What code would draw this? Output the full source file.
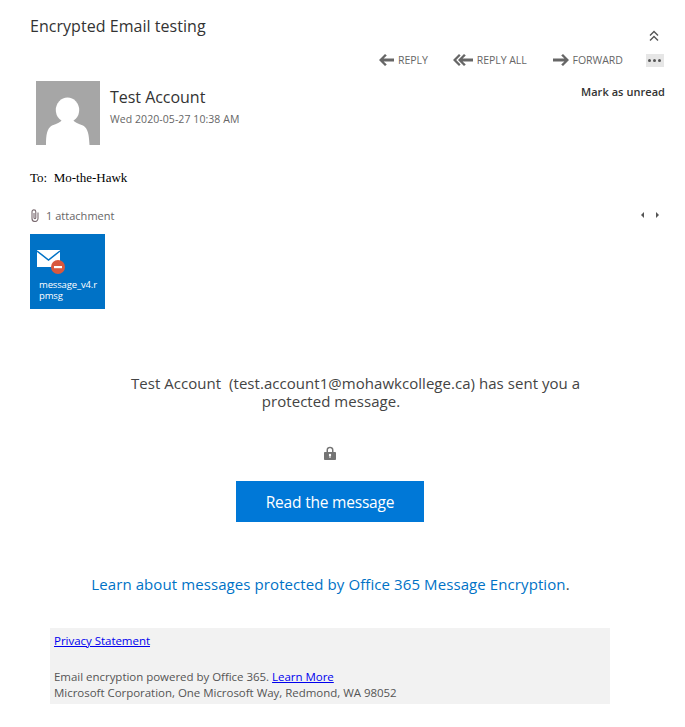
<template>
  <div class="page">
    <div class="title-row">
      <h1 class="title">Encrypted Email testing</h1>
      <svg class="collapse" width="10" height="12" viewBox="0 0 10 12" fill="none" stroke="#555" stroke-width="1.400">
        <path d="M1 5.500 5 1.500l4 4M1 10.500l4-4 4 4" />
      </svg>
    </div>

    <div class="actions">
      <span class="action reply">
        <svg width="15" height="12" viewBox="0 0 15 12"><path d="M6 0 7.800 1.500 4.600 4.500H15V7.500H4.600L7.800 10.500 6 12 0 6Z" fill="#666" /></svg>
        REPLY
      </span>
      <span class="action replyall">
        <svg width="20" height="12" viewBox="0 0 20 12"><path d="M6 0 7.600 1.500 3.200 6 7.600 10.500 6 12 0 6ZM11 0 12.800 1.500 9.600 4.500H20V7.500H9.600L12.800 10.500 11 12 5 6Z" fill="#666" /></svg>
        REPLY ALL
      </span>
      <span class="action forward">
        <svg width="16" height="12" viewBox="0 0 16 12"><path d="M10 0 8.200 1.500 11.400 4.500H0V7.500H11.400L8.200 10.500 10 12 16 6Z" fill="#666" /></svg>
        FORWARD
      </span>
      <span class="more"><i></i><i></i><i></i></span>
    </div>

    <div class="sender">
      <svg class="avatar" width="64" height="64" viewBox="0 0 64 64">
        <rect width="64" height="64" fill="#a6a6a6" />
        <ellipse cx="31.500" cy="29" rx="11.700" ry="12.500" fill="#fff" />
        <path d="M10 64C10 54 11 47 16 44.500 21 42.500 24 41.500 26 39H37C39 41.500 42 42.500 47 44.500 52 47 53 54 53.500 64Z" fill="#fff" />
      </svg>
      <div class="sender-text">
        <div class="name">Test Account</div>
        <div class="date">Wed 2020-05-27 10:38 AM</div>
      </div>
      <div class="unread">Mark as unread</div>
    </div>

    <div class="to">To:&nbsp; Mo-the-Hawk</div>

    <div class="attach-row">
      <svg width="8" height="13" viewBox="0 0 8 13" fill="none" stroke="#7a6a70" stroke-width="1.100">
        <path d="M7 3.500V9.500A3 3 0 0 1 1 9.500V2.800A1.900 1.900 0 0 1 4.800 2.800V8.800A.9.9 0 0 1 3 8.800V4" />
      </svg>
      <span class="attach-label">1 attachment</span>
      <span class="pager"><i class="left"></i><i class="right"></i></span>
    </div>

    <div class="tile">
      <svg class="tile-icon" width="30" height="29" viewBox="0 0 30 29">
        <path d="M0 0H23V17H0Z" fill="#fff" />
        <path d="M0 1 11.500 10 23 1" fill="none" stroke="#0072c6" stroke-width="1.500" />
        <circle cx="21" cy="17" r="7" fill="#d9583e" />
        <rect x="17" y="16" width="8" height="2.200" fill="#fff" />
      </svg>
      <div class="tile-name">message_v4.r<br />pmsg</div>
    </div>

    <div class="message">
      <div class="message-first">Test Account &nbsp;(test.account1@mohawkcollege.ca) has sent you a</div>
      <div class="message-second">protected message.</div>
    </div>

    <svg class="lock" width="12" height="14" viewBox="0 0 12 14">
      <path d="M1 6H2.500V4C2.500 2 4 .8 6 .8S9.500 2 9.500 4V6H11C11.500 6 12 6.400 12 7V13C12 13.600 11.500 14 11 14H1C.5 14 0 13.600 0 13V7C0 6.400 .5 6 1 6ZM4 6H8V4C8 2.800 7.100 2.200 6 2.200S4 2.800 4 4Z" fill="#747474" fill-rule="evenodd" />
      <circle cx="6" cy="9" r="1.200" fill="#fff" />
      <rect x="5.500" y="9" width="1" height="3" fill="#fff" />
    </svg>

    <a class="button">Read the message</a>

    <div class="learn"><a>Learn about messages protected by Office 365 Message Encryption</a>.</div>

    <div class="footer">
      <a class="plain">Privacy Statement</a>
      <div class="footer-copy">
        Email encryption powered by Office 365. <a class="plain">Learn More</a><br />
        Microsoft Corporation, One Microsoft Way, Redmond, WA 98052
      </div>
    </div>
  </div>
</template>

<style>
html, body { margin: 0; background: #fff; }
</style>

<style scoped>
.page {
  width: 685px;
  height: 727px;
  overflow: hidden;
  font-family: "Open Sans", "Noto Sans", sans-serif;
  color: #333;
  box-sizing: border-box;
  padding-top: 15px;
  display: flex;
  flex-direction: column;
}
.title-row { display: flex; justify-content: space-between; padding: 0 26px 0 30px; height: 25px; }
.title { margin: 0; font-size: 16px; font-weight: 400; line-height: 22px; color: #333; letter-spacing: 0.04px; }
.collapse { margin-top: 15px; }
.actions { display: flex; align-items: center; height: 20px; margin-top: 10px; padding-left: 379px; color: #666; font-size: 10.500px; letter-spacing: -0.05px; }
.action { display: inline-flex; align-items: center; gap: 4px; }
.replyall { margin-left: 25px; }
.forward { margin-left: 26px; }
.more { margin-left: 23px; width: 18px; height: 13px; background: #e6e6e6; display: flex; align-items: center; justify-content: center; gap: 2px; }
.more i { width: 3px; height: 3px; border-radius: 50%; background: #555; }
.sender { display: flex; padding: 11px 20px 0 36px; }
.avatar { flex: none; }
.sender-text { margin-left: 10px; }
.name { font-size: 16px; line-height: 22px; margin-top: 5px; color: #333; letter-spacing: -0.03px; }
.date { font-size: 10.500px; line-height: 16px; margin-top: 3px; color: #666; letter-spacing: 0.07px; }
.unread { margin-left: auto; font-size: 11px; font-weight: 600; line-height: 16px; margin-top: 3px; letter-spacing: 0.05px; }
.to { font-family: "Liberation Serif", serif; font-size: 13px; line-height: 14px; color: #000; padding-left: 30px; margin-top: 26px; }
.attach-row { display: flex; align-items: center; padding: 0 26px 0 31px; height: 16px; margin-top: 22px; color: #666; font-size: 11px; }
.attach-label { margin-left: 7px; letter-spacing: 0.02px; }
.pager { margin-left: auto; display: flex; gap: 12px; }
.pager i { width: 0; height: 0; border-top: 3px solid transparent; border-bottom: 3px solid transparent; }
.pager .left { border-right: 3px solid #555; }
.pager .right { border-left: 3px solid #555; }
.tile { width: 75px; height: 75px; margin: 11px 0 0 30px; background: #0072c6; color: #fff; position: relative; box-sizing: border-box; padding: 16px 0 0 7px; }
.tile-icon { display: block; }
.tile-name { position: absolute; left: 9px; top: 45px; font-size: 9.500px; font-weight: 500; line-height: 11px; letter-spacing: -0.15px; }
.message { font-size: 15px; line-height: 18px; color: #444; width: 400px; margin: 65px 0 0 131px; letter-spacing: 0.04px; }
.message-first { white-space: nowrap; }
.message-second { text-align: center; }
.lock { align-self: flex-start; margin: 36px 0 0 324px; }
.button { display: flex; align-items: center; justify-content: center; width: 188px; height: 41px; margin: 21px 0 0 236px; background: #0078d7; color: #fff; font-size: 15.500px; letter-spacing: -0.2px; }
.learn { margin-top: 51px; text-align: center; padding-right: 24px; font-size: 15px; line-height: 22px; color: #444; letter-spacing: 0.09px; white-space: nowrap; }
.learn a { color: #0072c6; }
.footer { width: 560px; height: 76px; margin: 33px 0 0 50px; padding: 5px 0 0 4px; box-sizing: border-box; background: #f2f2f2; font-size: 11.500px; line-height: 16px; color: #555; letter-spacing: -0.03px; }
.plain { color: #00e; text-decoration: underline; }
.footer-copy { margin-top: 20px; }
</style>
